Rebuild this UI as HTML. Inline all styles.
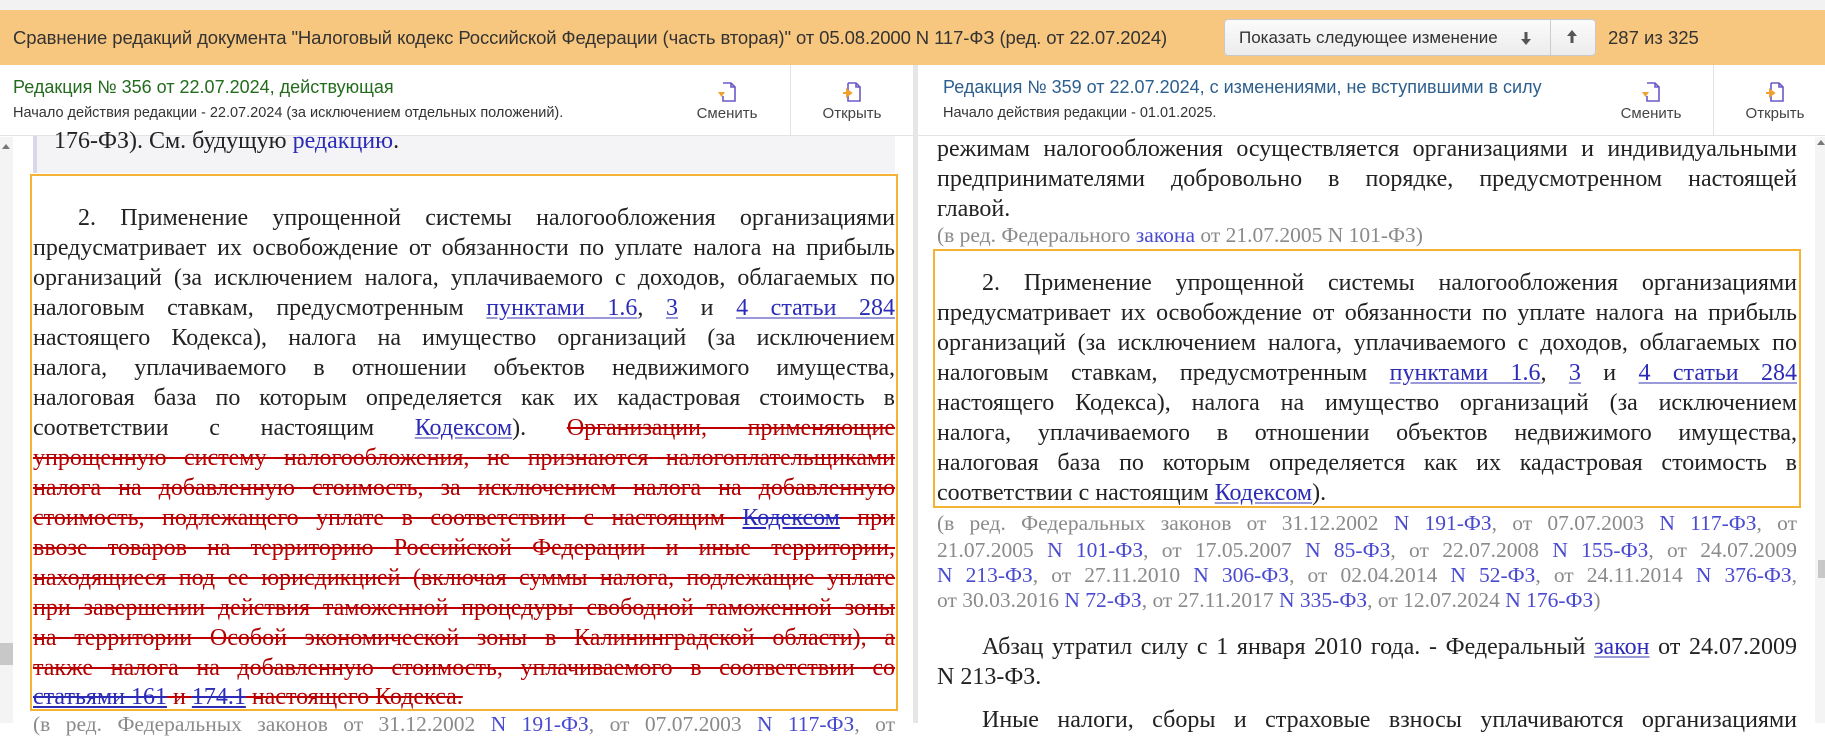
<!DOCTYPE html>
<html><head><meta charset="utf-8">
<style>
*{margin:0;padding:0;box-sizing:border-box}
body{width:1825px;height:723px;overflow:hidden;background:#fff;position:relative;font-family:"Liberation Sans","DejaVu Sans",sans-serif}
.abs{position:absolute}
.top{left:0;top:0;width:1825px;height:10px;background:#f2f2f2}
.bar{left:0;top:10px;width:1825px;height:55px;background:#f8c77f}
.bar .t{position:absolute;left:13px;top:0;line-height:55px;font-size:18.5px;color:#333;letter-spacing:-0.1px}
.btn{left:1224px;top:19px;width:372px;height:37px;border:1px solid #c9c9c9;border-radius:4px;background:linear-gradient(#fbfbfb,#ececec);font-size:17px;color:#333}
.hdr{top:65px;height:71px;background:#fff;border-bottom:1px solid #e3e3e3}
.ttl{font-size:18px;font-weight:normal}
.sub{font-size:14.5px;color:#333}
.act{font-size:15px;color:#444;text-align:center;width:90px}
.vd{width:1px;background:#e3e3e3}
.ser{font-family:"Liberation Serif","DejaVu Serif",serif;color:#222}
.ln{position:absolute;height:30px;line-height:30px;font-size:24px;overflow:hidden;text-align:justify;text-align-last:justify;white-space:normal}
.nj{text-align-last:left}
.nt{position:absolute;height:27px;line-height:27px;font-size:21.5px;color:#8a8a8a;overflow:hidden;text-align:justify;text-align-last:justify}
a{color:#2b2bb8;text-decoration:underline;text-decoration-color:#9a9ad8}
.nt a{color:#4a4ad0;text-decoration:none}
del{color:#b00000;text-decoration:line-through;text-decoration-color:#c00000}
del a{color:#2b2bb8;text-decoration:underline line-through;text-decoration-color:#2b2bb8}
</style></head><body>
<div class="abs top"></div>
<div class="abs bar"><div class="t">Сравнение редакций документа "Налоговый кодекс Российской Федерации (часть вторая)" от 05.08.2000 N 117-ФЗ (ред. от 22.07.2024)</div>
<div class="abs" style="left:1608px;top:0;line-height:55px;font-size:18.5px;color:#333">287 из 325</div></div>
<div class="abs btn"><span class="abs" style="left:14px;top:0;line-height:35px">Показать следующее изменение</span>
<svg class="abs" style="left:295px;top:11px" width="12" height="14" viewBox="0 0 12 14"><path d="M6 1v9" stroke="#555" stroke-width="3"/><path d="M1 8h10l-5 6z" fill="#555"/></svg>
<div class="abs" style="left:325px;top:0;width:1px;height:35px;background:#ccc"></div>
<svg class="abs" style="left:341px;top:10px" width="12" height="14" viewBox="0 0 12 14"><path d="M6 13V4" stroke="#555" stroke-width="3"/><path d="M1 6h10L6 0z" fill="#555"/></svg></div>

<div class="abs hdr" style="left:0;width:913px">
 <div class="abs ttl" style="left:13px;top:12px;color:#236b1d">Редакция № 356 от 22.07.2024, действующая</div>
 <div class="abs sub" style="left:13px;top:40px">Начало действия редакции - 22.07.2024 (за исключением отдельных положений).</div>
 <svg class="abs" style="left:716px;top:16px" width="22" height="22" viewBox="0 0 22 22"><path d="M7 2h8l4 4v14H7v-5M15 2v4h4" fill="none" stroke="#6a5ac8" stroke-width="1.6"/><path d="M2 11h7l-3.5 5z" fill="#f0a030"/></svg>
 <div class="abs act" style="left:682px;top:40px">Сменить</div>
 <div class="abs vd" style="left:790px;top:0;height:71px"></div>
 <svg class="abs" style="left:841px;top:16px" width="22" height="22" viewBox="0 0 22 22"><path d="M7 2h8l4 4v14H7v-5M7 9V2M15 2v4h4" fill="none" stroke="#6a5ac8" stroke-width="1.6"/><path d="M2 12h6M6 9l4 3-4 3z" fill="#f0a030" stroke="#f0a030" stroke-width="2"/></svg>
 <div class="abs act" style="left:807px;top:40px">Открыть</div>
</div>
<div class="abs" style="left:913px;top:65px;width:5px;height:658px;background:#e6e6e6"></div>
<div class="abs hdr" style="left:918px;width:907px">
 <div class="abs ttl" style="left:25px;top:12px;color:#2d5f8e">Редакция № 359 от 22.07.2024, с изменениями, не вступившими в силу</div>
 <div class="abs sub" style="left:25px;top:40px">Начало действия редакции - 01.01.2025.</div>
 <svg class="abs" style="left:722px;top:16px" width="22" height="22" viewBox="0 0 22 22"><path d="M7 2h8l4 4v14H7v-5M15 2v4h4" fill="none" stroke="#6a5ac8" stroke-width="1.6"/><path d="M2 11h7l-3.5 5z" fill="#f0a030"/></svg>
 <div class="abs act" style="left:688px;top:40px">Сменить</div>
 <div class="abs vd" style="left:795px;top:0;height:71px"></div>
 <svg class="abs" style="left:846px;top:16px" width="22" height="22" viewBox="0 0 22 22"><path d="M7 2h8l4 4v14H7v-5M7 9V2M15 2v4h4" fill="none" stroke="#6a5ac8" stroke-width="1.6"/><path d="M2 12h6M6 9l4 3-4 3z" fill="#f0a030" stroke="#f0a030" stroke-width="2"/></svg>
 <div class="abs act" style="left:812px;top:40px">Открыть</div>
</div>

<div class="abs" style="left:0;top:137px;width:13px;height:586px;background:#f4f4f4"></div>
<div class="abs" style="left:2px;top:144px;width:0;height:0;border-left:4px solid transparent;border-right:4px solid transparent;border-bottom:5px solid #777"></div>
<div class="abs" style="left:0;top:643px;width:13px;height:22px;background:#c8c8c8"></div>
<div class="abs" style="left:1815px;top:137px;width:10px;height:586px;background:#f4f4f4"></div>
<div class="abs" style="left:1817px;top:140px;width:0;height:0;border-left:4px solid transparent;border-right:4px solid transparent;border-bottom:5px solid #777"></div>
<div class="abs" style="left:1818px;top:560px;width:7px;height:18px;background:#c8c8c8"></div>

<div class="abs" style="left:33px;top:136px;width:862px;height:37px;background:#f4f4f6;border-left:4px solid #d8d8e8"></div>
<div class="abs ser" style="left:54px;top:126px;font-size:24px;line-height:30px">176-ФЗ). См. будущую <a style="text-decoration:none">редакцию</a>.</div>
<div class="abs" style="left:30px;top:174px;width:868px;height:537px;border:2px solid #f5b335"></div>
<div class="ser">
<div class="ln" style="left:33px;top:203px;width:862px;text-indent:45px">2. Применение упрощенной системы налогообложения организациями</div>
<div class="ln" style="left:33px;top:233px;width:862px">предусматривает их освобождение от обязанности по уплате налога на прибыль</div>
<div class="ln" style="left:33px;top:263px;width:862px">организаций (за исключением налога, уплачиваемого с доходов, облагаемых по</div>
<div class="ln" style="left:33px;top:293px;width:862px">налоговым ставкам, предусмотренным <a>пунктами 1.6</a>, <a>3</a> и <a>4 статьи 284</a></div>
<div class="ln" style="left:33px;top:323px;width:862px">настоящего Кодекса), налога на имущество организаций (за исключением</div>
<div class="ln" style="left:33px;top:353px;width:862px">налога, уплачиваемого в отношении объектов недвижимого имущества,</div>
<div class="ln" style="left:33px;top:383px;width:862px">налоговая база по которым определяется как их кадастровая стоимость в</div>
<div class="ln" style="left:33px;top:413px;width:862px">соответствии с настоящим <a>Кодексом</a>). <del>Организации, применяющие</del></div>
<div class="ln" style="left:33px;top:443px;width:862px"><del>упрощенную систему налогообложения, не признаются налогоплательщиками</del></div>
<div class="ln" style="left:33px;top:473px;width:862px"><del>налога на добавленную стоимость, за исключением налога на добавленную</del></div>
<div class="ln" style="left:33px;top:503px;width:862px"><del>стоимость, подлежащего уплате в соответствии с настоящим <a>Кодексом</a> при</del></div>
<div class="ln" style="left:33px;top:533px;width:862px"><del>ввозе товаров на территорию Российской Федерации и иные территории,</del></div>
<div class="ln" style="left:33px;top:563px;width:862px"><del>находящиеся под ее юрисдикцией (включая суммы налога, подлежащие уплате</del></div>
<div class="ln" style="left:33px;top:593px;width:862px"><del>при завершении действия таможенной процедуры свободной таможенной зоны</del></div>
<div class="ln" style="left:33px;top:623px;width:862px"><del>на территории Особой экономической зоны в Калининградской области), а</del></div>
<div class="ln" style="left:33px;top:653px;width:862px"><del>также налога на добавленную стоимость, уплачиваемого в соответствии со</del></div>
<div class="ln nj" style="left:33px;top:682px;width:862px"><del><a>статьями 161</a> и <a>174.1</a> настоящего Кодекса.</del></div>
<div class="nt" style="left:33px;top:711px;width:862px">(в ред. Федеральных законов от 31.12.2002 <a>N 191-ФЗ</a>, от 07.07.2003 <a>N 117-ФЗ</a>, от</div>

<div class="ln" style="left:937px;top:134px;width:860px">режимам налогообложения осуществляется организациями и индивидуальными</div>
<div class="ln" style="left:937px;top:164px;width:860px">предпринимателями добровольно в порядке, предусмотренном настоящей</div>
<div class="ln nj" style="left:937px;top:194px;width:860px">главой.</div>
<div class="nt" style="left:937px;top:222px;width:860px;text-align-last:left">(в ред. Федерального <a>закона</a> от 21.07.2005 N 101-ФЗ)</div>
<div class="abs" style="left:933px;top:249px;width:868px;height:259px;border:2px solid #f5b335"></div>
<div class="ln" style="left:937px;top:268px;width:860px;text-indent:45px">2. Применение упрощенной системы налогообложения организациями</div>
<div class="ln" style="left:937px;top:298px;width:860px">предусматривает их освобождение от обязанности по уплате налога на прибыль</div>
<div class="ln" style="left:937px;top:328px;width:860px">организаций (за исключением налога, уплачиваемого с доходов, облагаемых по</div>
<div class="ln" style="left:937px;top:358px;width:860px">налоговым ставкам, предусмотренным <a>пунктами 1.6</a>, <a>3</a> и <a>4 статьи 284</a></div>
<div class="ln" style="left:937px;top:388px;width:860px">настоящего Кодекса), налога на имущество организаций (за исключением</div>
<div class="ln" style="left:937px;top:418px;width:860px">налога, уплачиваемого в отношении объектов недвижимого имущества,</div>
<div class="ln" style="left:937px;top:448px;width:860px">налоговая база по которым определяется как их кадастровая стоимость в</div>
<div class="ln nj" style="left:937px;top:478px;width:860px">соответствии с настоящим <a>Кодексом</a>).</div>
<div class="nt" style="left:937px;top:510px;width:860px">(в ред. Федеральных законов от 31.12.2002 <a>N 191-ФЗ</a>, от 07.07.2003 <a>N 117-ФЗ</a>, от</div>
<div class="nt" style="left:937px;top:537px;width:860px">21.07.2005 <a>N 101-ФЗ</a>, от 17.05.2007 <a>N 85-ФЗ</a>, от 22.07.2008 <a>N 155-ФЗ</a>, от 24.07.2009</div>
<div class="nt" style="left:937px;top:562px;width:860px"><a>N 213-ФЗ</a>, от 27.11.2010 <a>N 306-ФЗ</a>, от 02.04.2014 <a>N 52-ФЗ</a>, от 24.11.2014 <a>N 376-ФЗ</a>,</div>
<div class="nt" style="left:937px;top:587px;width:860px;text-align-last:left">от 30.03.2016 <a>N 72-ФЗ</a>, от 27.11.2017 <a>N 335-ФЗ</a>, от 12.07.2024 <a>N 176-ФЗ</a>)</div>
<div class="ln" style="left:937px;top:632px;width:860px;text-indent:45px">Абзац утратил силу с 1 января 2010 года. - Федеральный <a>закон</a> от 24.07.2009</div>
<div class="ln nj" style="left:937px;top:662px;width:860px">N 213-ФЗ.</div>
<div class="ln" style="left:937px;top:705px;width:860px;text-indent:45px">Иные налоги, сборы и страховые взносы уплачиваются организациями</div>
</div>
</body></html>
